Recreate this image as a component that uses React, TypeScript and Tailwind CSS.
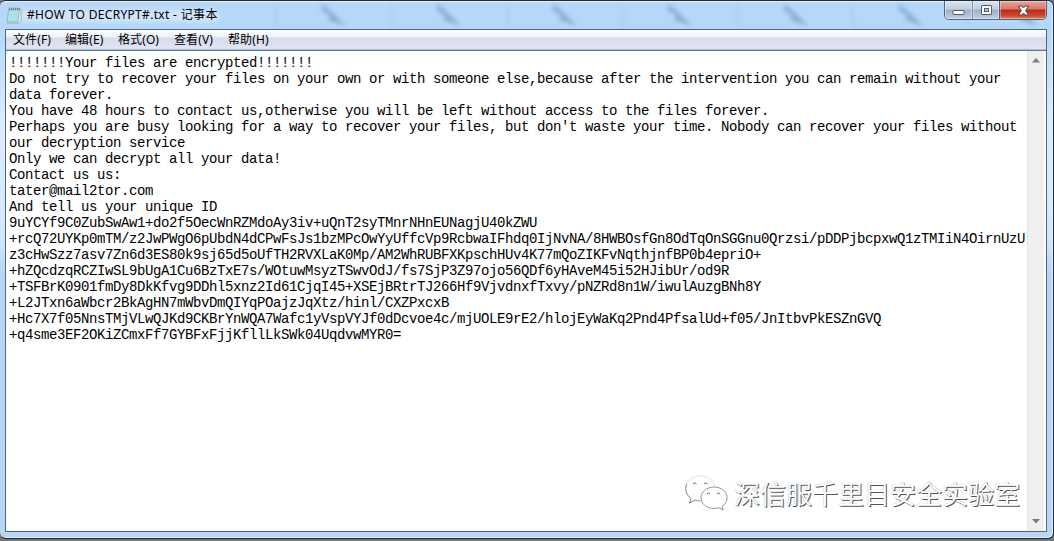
const menus = [
  { label: "文件(F)", box: "w-[52px]" },
  { label: "编辑(E)", box: "w-[53px]" },
  { label: "格式(O)", box: "w-[56px]" },
  { label: "查看(V)", box: "w-[54px]" },
  { label: "帮助(H)", box: "w-[54px]" },
];

const lines = [
  "!!!!!!!Your files are encrypted!!!!!!!",
  "Do not try to recover your files on your own or with someone else,because after the intervention you can remain without your",
  "data forever.",
  "You have 48 hours to contact us,otherwise you will be left without access to the files forever.",
  "Perhaps you are busy looking for a way to recover your files, but don't waste your time. Nobody can recover your files without",
  "our decryption service",
  "Only we can decrypt all your data!",
  "Contact us us:",
  "tater@mail2tor.com",
  "And tell us your unique ID",
  "9uYCYf9C0ZubSwAw1+do2f5OecWnRZMdoAy3iv+uQnT2syTMnrNHnEUNagjU40kZWU",
  "+rcQ72UYKp0mTM/z2JwPWgO6pUbdN4dCPwFsJs1bzMPcOwYyUffcVp9RcbwaIFhdq0IjNvNA/8HWBOsfGn8OdTqOnSGGnu0Qrzsi/pDDPjbcpxwQ1zTMIiN4OirnUzU",
  "z3cHwSzz7asv7Zn6d3ES80k9sj65d5oUfTH2RVXLaK0Mp/AM2WhRUBFXKpschHUv4K77mQoZIKFvNqthjnfBP0b4epriO+",
  "+hZQcdzqRCZIwSL9bUgA1Cu6BzTxE7s/WOtuwMsyzTSwvOdJ/fs7SjP3Z97ojo56QDf6yHAveM45i52HJibUr/od9R",
  "+TSFBrK0901fmDy8DkKfvg9DDhl5xnz2Id61CjqI45+XSEjBRtrTJ266Hf9VjvdnxfTxvy/pNZRd8n1W/iwulAuzgBNh8Y",
  "+L2JTxn6aWbcr2BkAgHN7mWbvDmQIYqPOajzJqXtz/hinl/CXZPxcxB",
  "+Hc7X7f05NnsTMjVLwQJKd9CKBrYnWQA7Wafc1yVspVYJf0dDcvoe4c/mjUOLE9rE2/hlojEyWaKq2Pnd4PfsalUd+f05/JnItbvPkESZnGVQ",
  "+q4sme3EF2OKiZCmxFf7GYBFxFjjKfllLkSWk04UqdvwMYR0=",
];

function NotepadIcon() {
  return (
    <svg width="16" height="17" viewBox="0 0 16 17">
      <path d="M3 2h12v12.500L13 16H1.5z" fill="#eef3ee" stroke="#8a9a94" strokeWidth=".7" />
      <path d="M2.500 2.500h11L12 15H1z" fill="#a3dbe2" stroke="#79aab2" strokeWidth=".6" />
      <path d="M3 5h9M2.8 7h9M2.6 9h9M2.4 11h9M2.2 13h9" stroke="#c6ebef" strokeWidth=".7" />
      <path d="M3.5.7v2.6M5.5.7v2.6M7.5.7v2.6M9.5.7v2.6M11.5.7v2.6M13.2.7v2.6" stroke="#66757a" strokeWidth=".8" />
    </svg>
  );
}

function GlassShadows() {
  return (
    <svg className="absolute left-0 top-0 blur-[2px]" width="1054" height="30" viewBox="0 0 1054 30">
      {[276, 391, 507, 622, 738, 853, 968].map((x) => (
        <g key={x}>
          <path d={`M${x} 4V27H${x + 50}`} fill="none" stroke="#8fb4d8" strokeWidth="1.2" opacity=".5" />
          <path d={`M${x + 46} 4L${x + 54} 10L${x + 70} 26L${x + 52} 20L${x + 54} 15L${x + 46} 11z`} fill="#7099bd" opacity=".65" />
        </g>
      ))}
      <rect x="15" y="10" width="205" height="12" rx="6" fill="#fff" opacity=".35" />
    </svg>
  );
}

function WindowButtons() {
  return (
    <div className="absolute left-[944px] top-px flex h-[19px] w-[103px] overflow-hidden rounded-b-[5px] border border-t-0 border-[#52647a]">
      <div className="grid w-[28px] place-items-center border-r border-[#7488a0] bg-[linear-gradient(#dae4ef_0%,#c1cedd_45%,#9db0c7_50%,#bcd0e6_100%)] shadow-[inset_0_0_0_1px_#ffffff70]">
        <svg width="13" height="13" viewBox="0 0 13 13">
          <rect x="1" y="6.5" width="11" height="4" rx=".5" fill="#fff" stroke="#535a69" />
        </svg>
      </div>
      <div className="grid w-[27px] place-items-center border-r border-[#66536a] bg-[linear-gradient(#dae4ef_0%,#c1cedd_45%,#9db0c7_50%,#bcd0e6_100%)] shadow-[inset_0_0_0_1px_#ffffff70]">
        <svg width="13" height="11" viewBox="0 0 13 11">
          <rect x="1.500" y=".5" width="10" height="9" rx=".5" fill="#fff" stroke="#535a69" />
          <rect x="4.5" y="3.500" width="4" height="3" fill="#b4c4d7" stroke="#535a69" />
        </svg>
      </div>
      <div className="grid flex-1 place-items-center bg-[linear-gradient(#e8a79a_0%,#d57768_45%,#b9281a_50%,#c94830_80%,#db8062_100%)] shadow-[inset_0_0_0_1px_#ffffff60]">
        <svg width="13" height="11" viewBox="0 0 13 11">
          <path d="M1.500 1h3.500l1.5 2L8 1h3.500L8.7 5.5 11.500 10H8L6.500 8 5 10H1.500l2.800-4.500z" fill="#fff" stroke="#594052" />
        </svg>
      </div>
    </div>
  );
}

function ScrollBar() {
  return (
    <div className="flex w-[17px] shrink-0 flex-col items-center justify-between border-l border-[#e4e4e4] bg-[#efefef] py-[7px]">
      <svg width="8" height="5" viewBox="0 0 8 5">
        <path d="M4 0L8 4.500H0z" fill="#7b7b7b" />
      </svg>
      <svg width="8" height="5" viewBox="0 0 8 5">
        <path d="M4 4.500L8 0H0z" fill="#7b7b7b" />
      </svg>
    </div>
  );
}

function Watermark() {
  return (
    <div className="absolute left-[684px] top-[474px] flex items-center">
      <svg width="45" height="37" viewBox="0 -1 45 37" fill="none" stroke="#777" strokeWidth=".9">
        <path d="M31 11C29 4 23 1 16 1 10 1 5 4 2.500 9" stroke="#dedede" />
        <path d="M2.500 9Q-.5 18 7 23.500L5.500 28l5.500-3q3 1 5.500 1" />
        <path d="M30 12c7.500 0 13 4.800 13 10.800 0 4-2 6.700-5 8.700l1.200 3.500-4.500-2.300q-2.300.7-4.700.7c-7.500 0-13-4.800-13-10.600S22.500 12 30 12z" fill="#fff" stroke="#888" />
        <path d="M9 9q2-2.500 3.500 0M20 9q2-2.500 3.500 0M23 19q1.500-2 3 0M33 19q1.500-2 3 0" stroke="#555" />
      </svg>
      <span className="ml-[5px] whitespace-nowrap font-['Noto_Sans_CJK_SC',sans-serif] text-[26px] leading-[36px] text-white [text-shadow:1px_1px_0_#555,0_0_1px_#999]">
        深信服千里目安全实验室
      </span>
    </div>
  );
}

export default function App() {
  return (
    <div className="relative h-[541px] w-[1054px] overflow-hidden bg-[#757575]">
      <div className="flex h-[539px] flex-col rounded-[6px] border-y border-r border-[#1c2b3c] bg-[linear-gradient(#b9d7f7,#b4d8fa_30px,#dcecfc_120px,#d5e8fb_235px,#b7d5f5_270px,#b9d6f5)] shadow-[inset_0_1px_0_#e8f3ff,inset_-1px_-1px_0_#dcefff]">
        <div className="relative h-[28px] shrink-0">
          <div className="absolute inset-0 -top-px overflow-hidden">
            <GlassShadows />
          </div>
          <div className="relative flex h-[28px] items-center pl-[6px]">
            <NotepadIcon />
            <span className="ml-[5px] whitespace-pre font-['Noto_Sans','Noto_Sans_CJK_SC',sans-serif] text-[12px] leading-[18px] tracking-[0.32px] text-black">
              #HOW TO DECRYPT#.txt - 记事本
            </span>
          </div>
        </div>
        <div className="ml-[5px] mr-[6px] flex h-[503px] flex-col border border-[#52677c] bg-white">
          <div className="flex h-[20px] shrink-0 items-center border-b border-[#b6bccc] bg-[linear-gradient(#ffffff_0%,#eef1f8_35%,#d6dcec_42%,#e1e5f3_100%)] pl-[7px] font-['Noto_Sans','Noto_Sans_CJK_SC',sans-serif] text-[12px] leading-[18px] tracking-[0.1px] text-black">
            {menus.map((m) => (
              <span key={m.label} className={`${m.box} whitespace-nowrap`}>
                {m.label}
              </span>
            ))}
          </div>
          <div className="flex min-h-0 flex-1 border-t border-[#527d9c] pr-[2px]">
            <div className="min-w-0 flex-1 pl-[3px] pt-[4px] font-['Liberation_Mono',monospace] text-[14px] leading-[16px] tracking-[-0.4014px] text-black">
              {lines.map((line) => (
                <div key={line} className="h-[16px] whitespace-pre">
                  {line}
                </div>
              ))}
            </div>
            <ScrollBar />
          </div>
        </div>
      </div>
      <WindowButtons />
      <Watermark />
    </div>
  );
}
